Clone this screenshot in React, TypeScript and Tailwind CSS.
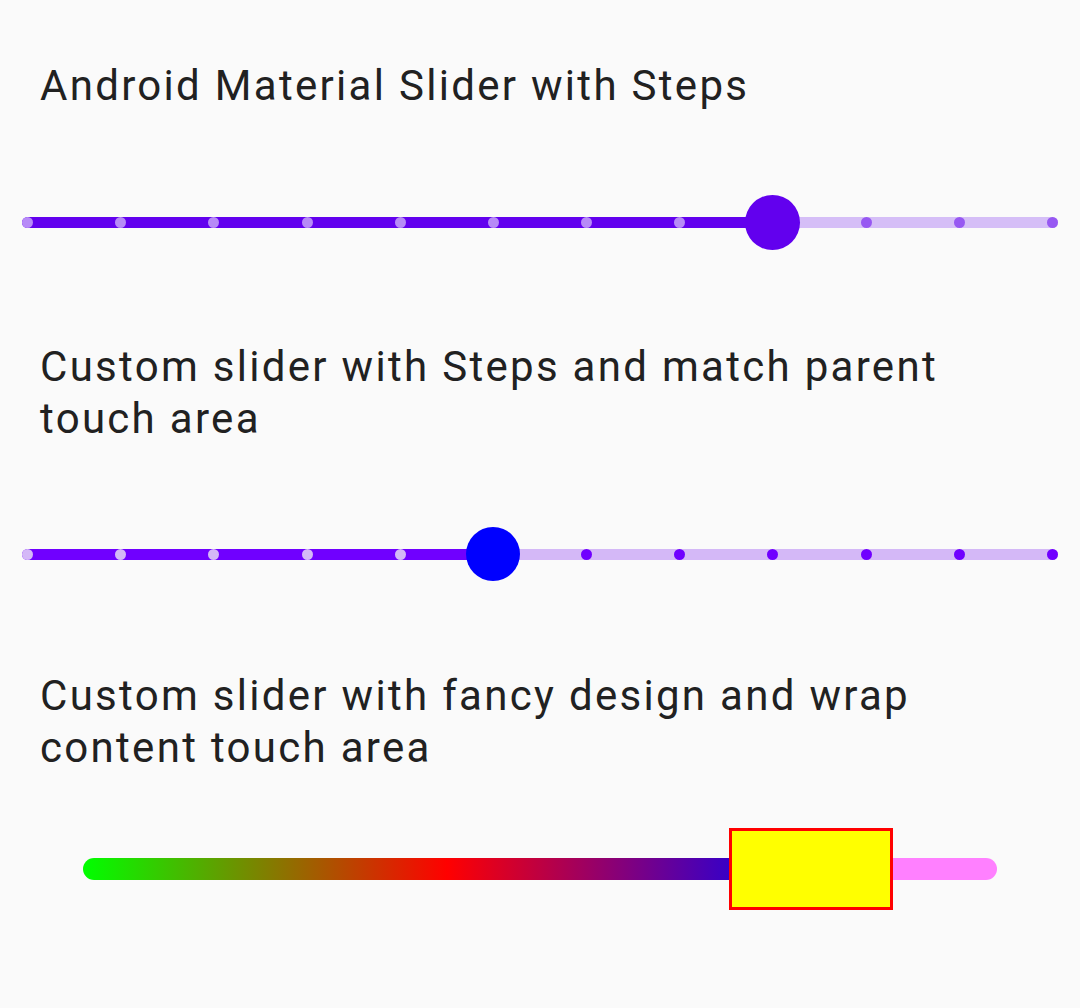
import React from 'react';

const TICKS = 12;

interface StepSliderProps {
  value: number;
  activeTrack: string;
  inactiveTrack: string;
  activeTick: string;
  inactiveTick: string;
  thumb: string;
  thumbSize: number;
}

function StepSlider({ value, activeTrack, inactiveTrack, activeTick, inactiveTick, thumb, thumbSize }: StepSliderProps) {
  // ticks are 11px dots, first and last sit on the track ends
  const thumbX = 5.5 + (value * 1025) / (TICKS - 1);

  return (
    <div className="relative mx-[22px] flex h-[56px] items-center">
      <div className="flex h-[11px] w-full overflow-hidden rounded-full">
        <div style={{ width: thumbX, backgroundColor: activeTrack }} />
        <div className="flex-1" style={{ backgroundColor: inactiveTrack }} />
      </div>
      {/* tick marks sit on top of the track */}
      <div className="absolute inset-0 flex items-center justify-between">
        {Array.from({ length: TICKS }).map((_, i) => (
          <div
            key={i}
            className="h-[11px] w-[11px] rounded-full"
            style={{ backgroundColor: i <= value ? activeTick : inactiveTick }}
          />
        ))}
      </div>
      <div
        className="absolute rounded-full"
        style={{
          left: thumbX - thumbSize / 2,
          width: thumbSize,
          height: thumbSize,
          backgroundColor: thumb,
        }}
      />
    </div>
  );
}

function FancySlider() {
  return (
    <div className="ml-[83px] flex h-[82px] w-[914px] items-center">
      <div className="h-[22px] w-[646px] rounded-l-full bg-[linear-gradient(to_right,#00ff00,#ff0000,#0000ff)] bg-[length:728px_100%] bg-no-repeat" />
      <div className="h-[82px] w-[164px] border-[3px] border-[#ff0000] bg-[#ffff00]" />
      <div className="h-[22px] flex-1 rounded-r-full bg-[#ff80ff]" />
    </div>
  );
}

export default function App() {
  const title = "px-[40px] text-[42px] leading-[52px] tracking-[2.3px] text-[#212121]";

  return (
    <div className="flex min-h-[1008px] w-[1080px] flex-col bg-[#fafafa] pt-[60px]" style={{ fontFamily: 'Roboto, "Noto Sans", sans-serif' }}>
      <div className={title}>Android Material Slider with Steps</div>
      <div className="mt-[82px]">
        <StepSlider
          value={8}
          activeTrack="#6200ee"
          inactiveTrack="#d5bef7"
          activeTick="#b78af7"
          inactiveTick="#9758f2"
          thumb="#6200ee"
          thumbSize={55}
        />
      </div>

      <div className={`${title} mt-[91px]`}>
        Custom slider with Steps and match parent
        <br />
        touch area
      </div>
      <div className="mt-[81px]">
        <StepSlider
          value={5}
          activeTrack="#7000ff"
          inactiveTrack="#d4b8f7"
          activeTick="#d4b8f7"
          inactiveTick="#7000ff"
          thumb="#0000ff"
          thumbSize={54}
        />
      </div>

      <div className={`${title} mt-[88px]`}>
        Custom slider with fancy design and wrap
        <br />
        content touch area
      </div>
      <div className="mt-[54px]">
        <FancySlider />
      </div>
    </div>
  );
}
